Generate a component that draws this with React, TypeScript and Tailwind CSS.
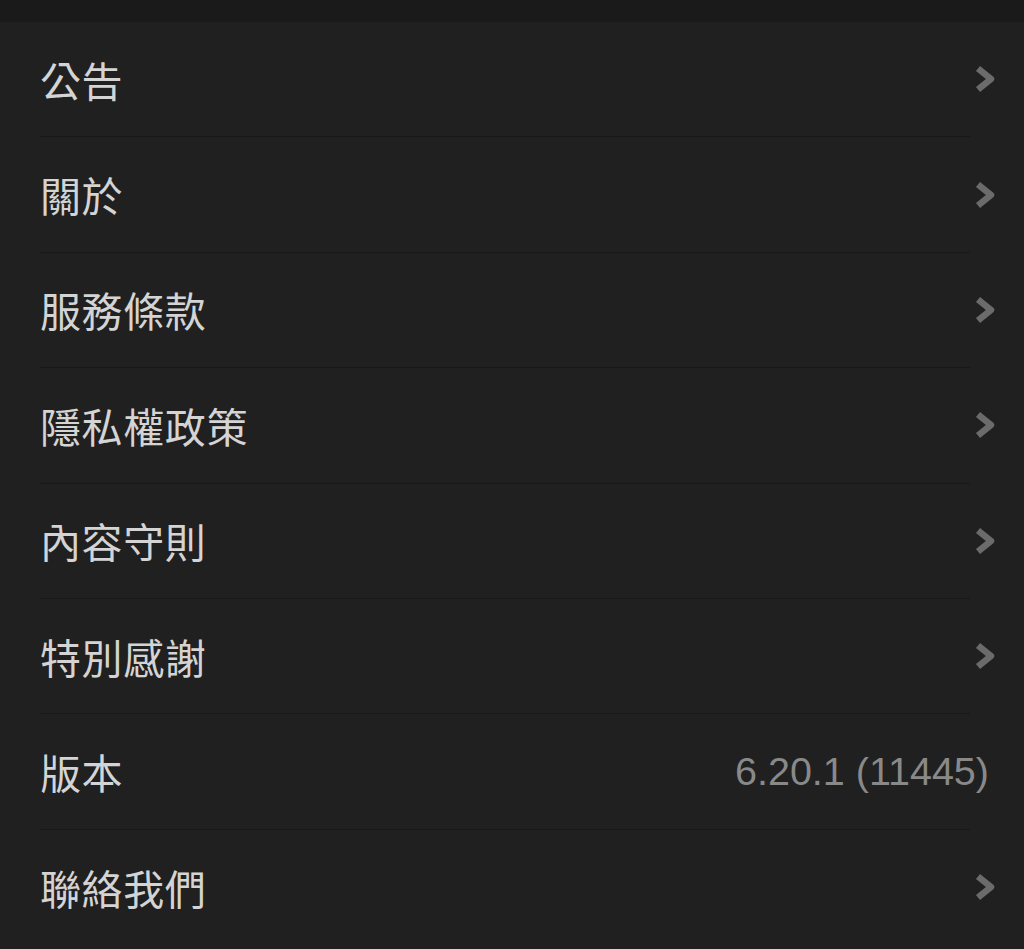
import React from 'react';

const items: { label: string; value?: string }[] = [
  { label: '公告' },
  { label: '關於' },
  { label: '服務條款' },
  { label: '隱私權政策' },
  { label: '內容守則' },
  { label: '特別感謝' },
  { label: '版本', value: '6.20.1 (11445)' },
  { label: '聯絡我們' },
];

function Chevron() {
  return (
    <svg viewBox="0 0 22 28" className="w-[22px] h-[28px] mr-[-26px] shrink-0" fill="none">
      <path d="M4 3.5 L17 14 L4 24.5" stroke="#6b6b6b" strokeWidth="6.5" strokeLinecap="butt" strokeLinejoin="round" />
    </svg>
  );
}

export default function App() {
  return (
    <div className="w-[1024px] h-[949px] bg-[#202020] overflow-hidden flex flex-col" style={{ fontFamily: '"Noto Sans CJK TC", "Noto Sans", sans-serif' }}>
      {/* top bar */}
      <div className="h-[22px] bg-[#1a1a1a] shrink-0" />

      <div className="flex flex-col">
        {items.map((item, i) => (
          <div
            key={item.label}
            className={`ml-[40px] w-[930px] h-[115.4px] flex items-center justify-between ${i < items.length - 1 ? 'border-b border-[#181818]' : ''}`}
          >
            <span className="text-[41px] leading-none text-[#d4d4d4] tracking-[0.6px]">{item.label}</span>
            {item.value ? (
              <span className="text-[39.5px] leading-none text-[#898989] mr-[-19px]" style={{ fontFamily: '"Liberation Sans", Arial, sans-serif' }}>
                {item.value}
              </span>
            ) : (
              <Chevron />
            )}
          </div>
        ))}
      </div>
    </div>
  );
}
